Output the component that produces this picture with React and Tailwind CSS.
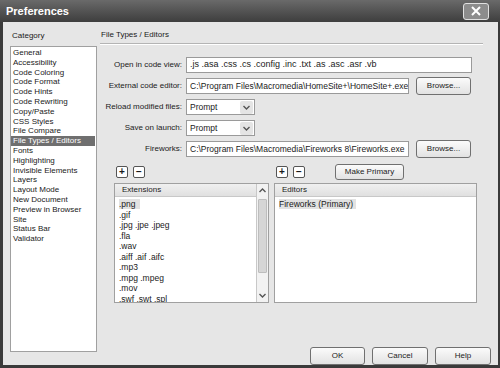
import React from 'react';

const categories = [
  "General", "Accessibility", "Code Coloring", "Code Format", "Code Hints", "Code Rewriting",
  "Copy/Paste", "CSS Styles", "File Compare", "File Types / Editors", "Fonts", "Highlighting",
  "Invisible Elements", "Layers", "Layout Mode", "New Document", "Preview in Browser", "Site",
  "Status Bar", "Validator",
];

const extensions = [
  ".png", ".gif", ".jpg .jpe .jpeg", ".fla", ".wav", ".aiff .aif .aifc", ".mp3", ".mpg .mpeg", ".mov", ".swf .swt .spl",
];

function Chevron({ up }) {
  return (
    <svg width="7" height="5" viewBox="0 0 7 5">
      <path d={up ? "M0.5 4 L3.5 1 L6.5 4" : "M0.5 1 L3.5 4 L6.5 1"} fill="none" stroke="#555" strokeWidth="1.4" />
    </svg>
  );
}

function Button({ children, className = "" }) {
  return (
    <button className={`flex shrink-0 items-center justify-center rounded-[3px] border border-[#707070] bg-gradient-to-b from-[#fbfbfb] to-[#e2e2e2] text-[8px] whitespace-nowrap text-[#222] ${className}`}>
      {children}
    </button>
  );
}

function Select({ value }) {
  return (
    <div className="flex h-[16px] w-[69px] items-center border border-[#9a9a9a] bg-white pl-[3px] text-[8.5px]">
      <span className="flex-1">{value}</span>
      <div className="mr-px flex h-[13px] w-[13px] items-center justify-center rounded-[2px] bg-[#e4e4e4]">
        <Chevron />
      </div>
    </div>
  );
}

function PlusMinus() {
  return (
    <div className="flex shrink-0 gap-[5px]">
      <div className="flex h-[12px] w-[12px] items-center justify-center rounded-[2px] border border-[#555] bg-white text-[10px] font-bold leading-none">+</div>
      <div className="flex h-[12px] w-[12px] items-center justify-center rounded-[2px] border border-[#555] bg-white text-[10px] font-bold leading-none">−</div>
    </div>
  );
}

function Row({ label, children }) {
  return (
    <div className="flex h-[16px] items-center">
      <span className="w-[86px] shrink-0 whitespace-nowrap pr-[4px] text-right text-[8px]">{label}</span>
      {children}
    </div>
  );
}

function Field({ value, w, size = "text-[8.5px]" }) {
  return (
    <div className={`flex h-[16px] shrink-0 items-center overflow-hidden border border-[#9a9a9a] bg-white pl-[3px] ${size} ${w}`}>
      <span className="whitespace-nowrap">{value}</span>
    </div>
  );
}

export default function App() {
  return (
    <div className="flex h-[368px] w-[500px] flex-col overflow-hidden bg-[#3a3a3a] text-[#1a1a1a]" style={{ fontFamily: '"Liberation Sans", Arial, sans-serif' }}>
      {/* title bar */}
      <div className="flex h-[22px] shrink-0 items-center justify-between bg-gradient-to-b from-[#6a6a6a] to-[#3e3e3e] pl-[6px] pr-[11px]">
        <span className="text-[11px] font-bold text-white">Preferences</span>
        <div className="flex h-[17px] w-[26px] items-center justify-center rounded-[3px] border border-[#e0e0e0] bg-[#8c8c8c]">
          <svg width="10" height="10" viewBox="0 0 10 10">
            <path d="M1 1 L9 9 M9 1 L1 9" stroke="#fff" strokeWidth="2" />
          </svg>
        </div>
      </div>

      {/* body */}
      <div className="mb-[3px] ml-[3px] mr-[2px] flex flex-1 bg-[#e6e6e6] pr-[7px]">
        {/* category column */}
        <div className="ml-[7px] flex w-[87px] shrink-0 flex-col pt-[9px]">
          <span className="ml-[2px] text-[8px] leading-[10px]">Category</span>
          <div className="mt-[5px] h-[306px] border border-[#a0a0a0] bg-white pt-[1px]">
            {categories.map(c => (
              <div
                key={c}
                className={`mr-[1px] h-[9.8px] whitespace-nowrap pl-[2px] text-[8px] leading-[9.8px] ${c === "File Types / Editors" ? "bg-[#6f6f6f] text-white" : ""}`}
              >
                {c}
              </div>
            ))}
          </div>
        </div>

        {/* right panel */}
        <div className="ml-[3px] flex flex-1 flex-col pt-[8px]">
          <span className="ml-[1px] text-[8px] leading-[10px]">File Types / Editors</span>
          <div className="mt-[3px] mr-[8px] border-t border-b border-t-[#b4b4b4] border-b-white" />

          <div className="mt-[12px] flex flex-col gap-[5px]">
            <Row label="Open in code view:">
              <Field value=".js .asa .css .cs .config .inc .txt .as .asc .asr .vb" w="w-[286px]" size="text-[9px]" />
            </Row>
            <Row label="External code editor:">
              <Field value="C:\Program Files\Macromedia\HomeSite+\HomeSite+.exe" w="w-[223px]" />
              <Button className="ml-[7px] h-[18px] w-[55px]">Browse...</Button>
            </Row>
            <Row label="Reload modified files:">
              <Select value="Prompt" />
            </Row>
            <Row label="Save on launch:">
              <Select value="Prompt" />
            </Row>
            <Row label="Fireworks:">
              <Field value="C:\Program Files\Macromedia\Fireworks 8\Fireworks.exe" w="w-[223px]" />
              <Button className="ml-[7px] h-[18px] w-[55px]">Browse...</Button>
            </Row>
          </div>

          {/* lists */}
          <div className="ml-[14px] mt-[6px] flex gap-[5px]">
            <div className="flex w-[155px] shrink-0 flex-col">
              <div className="ml-[2px] flex h-[17px] items-center">
                <PlusMinus />
              </div>
              <div className="mt-[3px] flex h-[120px] border border-[#a0a0a0] bg-white">
                <div className="flex flex-1 flex-col overflow-hidden">
                  <div className="flex h-[13px] shrink-0 items-center border-b border-[#c8c8c8] bg-gradient-to-b from-[#f0f0f0] to-[#e0e0e0] pl-[7px] text-[8px]">Extensions</div>
                  <div className="pl-[4px] pt-[2px]">
                    {extensions.map((e, i) => (
                      <div key={e} className="h-[10.5px] whitespace-nowrap text-[8.5px] leading-[10.5px]">
                        <span className={i === 0 ? "bg-[#e2e2e2] pr-[4px]" : ""}>{e}</span>
                      </div>
                    ))}
                  </div>
                </div>
                <div className="flex w-[12px] shrink-0 flex-col border-l border-[#c8c8c8] bg-[#f2f2f2]">
                  <div className="flex h-[13px] items-center justify-center"><Chevron up /></div>
                  <div className="mx-[1px] mt-[2px] h-[74px] rounded-[1px] border border-[#bdbdbd] bg-[#d6d6d6]" />
                  <div className="flex-1" />
                  <div className="flex h-[13px] items-center justify-center"><Chevron /></div>
                </div>
              </div>
            </div>

            <div className="flex w-[203px] shrink-0 flex-col">
              <div className="ml-[2px] flex h-[17px] items-center gap-[30px]">
                <PlusMinus />
                <Button className="h-[16px] w-[69px]">Make Primary</Button>
              </div>
              <div className="mt-[3px] flex h-[120px] flex-col border border-[#a0a0a0] bg-white">
                <div className="flex h-[13px] shrink-0 items-center border-b border-[#c8c8c8] bg-gradient-to-b from-[#f0f0f0] to-[#e0e0e0] pl-[7px] text-[8px]">Editors</div>
                <div className="pl-[4px] pt-[2px] text-[8.5px] leading-[10.5px]">
                  <span className="bg-[#e2e2e2] pr-[3px]">Fireworks (Primary)</span>
                </div>
              </div>
            </div>
          </div>

          <div className="flex-1" />
          <div className="flex justify-end gap-[7px]">
            <Button className="h-[18px] w-[55px]">OK</Button>
            <Button className="h-[18px] w-[56px]">Cancel</Button>
            <Button className="h-[18px] w-[56px]">Help</Button>
          </div>
        </div>
      </div>
    </div>
  );
}
